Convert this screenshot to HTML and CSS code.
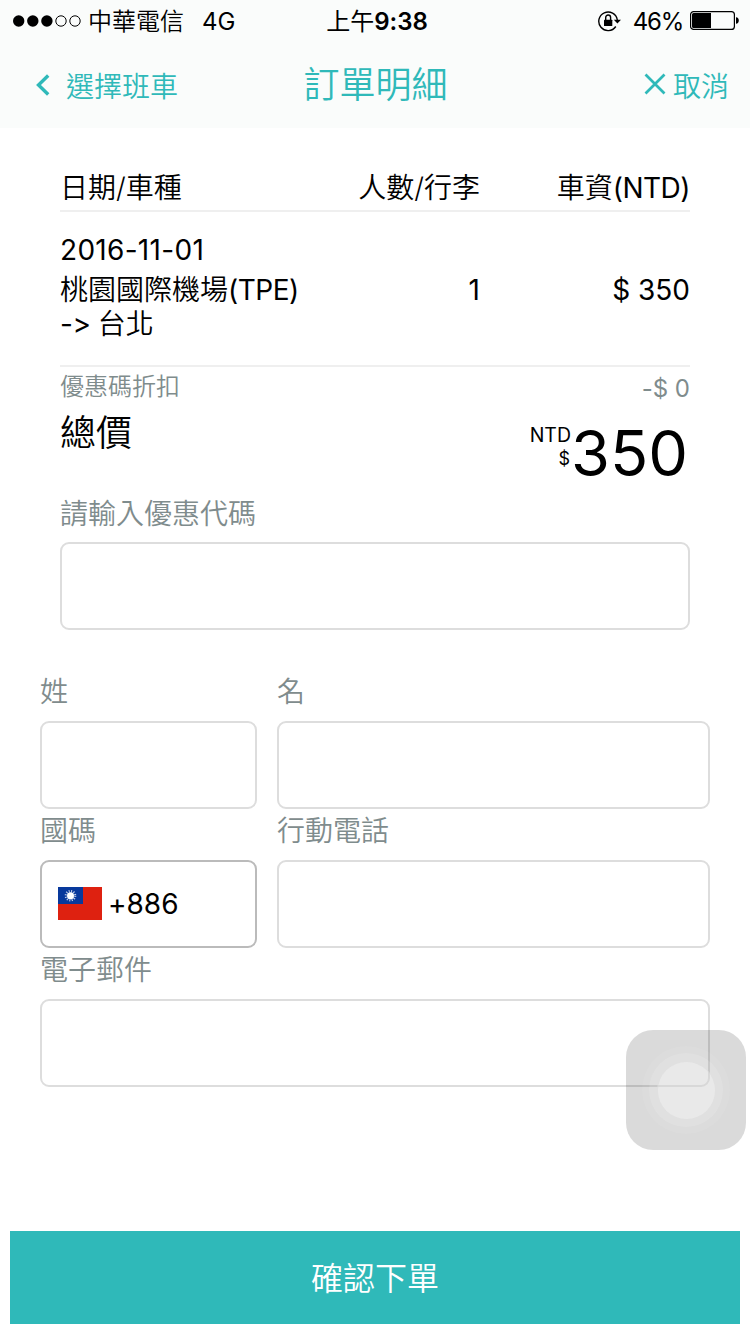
FILE: index.html
```html
<!DOCTYPE html>
<html lang="zh-Hant">
<head>
<meta charset="utf-8">
<title>訂單明細</title>
<link rel="stylesheet" href="styles.css">
</head>
<body>
<header class="top">
  <div class="status">
    <div class="status-left">
      <svg class="signal" width="68" height="12" viewBox="0 0 68 12"><circle cx="5.7" cy="6" r="5.7"/><circle cx="19.8" cy="6" r="5.7"/><circle cx="33.9" cy="6" r="5.7"/><g fill="none" stroke="#000" stroke-width="1"><circle cx="48" cy="6" r="5.2"/><circle cx="62" cy="6" r="5.2"/></g></svg>
      <span class="carrier">中華電信</span><span class="network">4G</span>
    </div>
    <div class="clock">上午<b>9:38</b></div>
    <div class="status-right">
      <svg class="lock" width="24" height="22" viewBox="0 0 24 22"><path d="M17.800 16.500A9.300 9.300 0 1 1 19.300 10" fill="none" stroke="#000" stroke-width="1.400"/><path d="M15.800 9.700H23l-3.600 3.800z"/><rect x="6" y="9.700" width="8.300" height="6.300" rx=".5"/><path d="M7.700 10V7.400a2.450 2.450 0 0 1 4.900 0V10" fill="none" stroke="#000" stroke-width="1.400"/></svg>
      <span class="percent">46%</span>
      <svg class="battery" width="50" height="20" viewBox="0 0 50 20"><rect x=".6" y=".6" width="43.8" height="17.8" rx="3" fill="none" stroke="#000" stroke-width="1.2"/><path d="M2 3.5Q2 2 3.5 2H21v15H3.500Q2 17 2 15.500zM46 6.300q2.800.3 2.800 3.200t-2.800 3.200z"/></svg>
    </div>
  </div>
  <nav class="nav">
    <a class="back"><svg width="14" height="22" viewBox="0 0 14 22"><path d="M12.200 1.500 2.500 11l9.700 9.500" fill="none" stroke="#2fb9b9" stroke-width="3.400"/></svg><span>選擇班車</span></a>
    <h1 class="title">訂單明細</h1>
    <a class="cancel"><svg width="22" height="22" viewBox="0 0 22 22"><path d="m1.500 1.500 19 19m0-19-19 19" fill="none" stroke="#2fb9b9" stroke-width="2.700"/></svg><span>取消</span></a>
  </nav>
</header>
<main>
  <section class="order">
    <div class="row head"><span>日期/車種</span><span>人數/行李</span><span>車資<span class="latin tight">(NTD)</span></span></div>
    <div class="row item">
      <div class="trip"><div class="date latin">2016-11-01</div><div>桃園國際機場<span class="latin tight">(TPE)</span></div><div><span class="latin tight">-&gt; </span>台北</div></div>
      <span class="latin">1</span><span class="latin">$ 350</span>
    </div>
    <div class="discount"><span>優惠碼折扣</span><span class="minus">-$ 0</span></div>
    <div class="total"><span class="total-label">總價</span><div class="currency"><div>NTD</div><div>$</div></div><span class="amount">350</span></div>
    <label class="label promo-label">請輸入優惠代碼</label>
    <div class="field"></div>
  </section>
  <form class="form">
    <div class="pair">
      <div><label class="label">姓</label><div class="field"></div></div>
      <div><label class="label">名</label><div class="field"></div></div>
    </div>
    <div class="pair">
      <div><label class="label">國碼</label><div class="field code">
        <svg class="flag" width="44" height="33" viewBox="0 0 44 33"><path fill="#de2110" d="M0 0h44v33H0z"/><path fill="#08399c" d="M0 0h25v17H0z"/><circle cx="12.500" cy="8.700" r="4.500" fill="none" stroke="#fff" stroke-opacity=".75" stroke-width="2.600" stroke-dasharray="1 1.356"/><circle cx="12.500" cy="8.700" r="3.500" fill="#fff"/></svg>
        <span class="latin">+886</span></div></div>
      <div><label class="label">行動電話</label><div class="field"></div></div>
    </div>
    <label class="label">電子郵件</label>
    <div class="field"></div>
  </form>
</main>
<button class="submit">確認下單</button>
<div class="touch"><div class="ring outer"><div class="ring middle"><div class="ring inner"></div></div></div></div>
</body>
</html>
```
FILE: styles.css
```css
* { box-sizing: border-box; }
body {
  margin: 0; width: 750px; height: 1334px; overflow: hidden;
  display: flex; flex-direction: column; position: relative;
  background: #fff; color: #000;
  font: 350 28px/34px Inter, "Noto Sans CJK TC", sans-serif;
  font-feature-settings: "calt" 0;
}
svg { display: block; flex: none; }
.latin { font-weight: 400; }
.tight { letter-spacing: -.5px; }
.top { height: 128px; background: #fafcfb; }
.status {
  height: 40px; display: grid; grid-template-columns: 1fr auto 1fr;
  align-items: center; font-size: 24px; line-height: 38px; padding: 0 11px 0 13px;
}
.status span, .clock { padding-top: 3px; }
.status-left, .status-right { display: flex; align-items: center; }
.status-right { justify-content: flex-end; }
.carrier { margin-left: 7px; }
.network { margin-left: 18px; font-weight: 400; }
.clock { font-weight: 400; padding-left: 2px; }
.clock b { font-weight: 600; }
.lock { margin-right: 11px; }
.percent { margin-right: 7px; font-weight: 400; letter-spacing: -1.200px; }
.battery, .signal { margin-top: 1px; }
.battery { margin-right: -1px; }
.nav {
  height: 88px; display: grid; grid-template-columns: 1fr auto 1fr;
  align-items: center; padding: 0 21px 0 36px; color: #2fb9b9;
}
.back, .cancel { display: flex; align-items: center; }
.back span, .cancel span { padding-top: 5px; }
.back svg { margin-top: 2px; }
.back { gap: 16px; }
.cancel { justify-content: flex-end; gap: 7px; }
.title { margin: 0 14px 0 0; font-size: 36px; font-weight: 350; line-height: 86px; padding-top: 2px; }
.order { padding: 42px 60px 0; }
.row { display: grid; grid-template-columns: 240px 180px 210px; align-items: center; border-bottom: 2px solid #efefef; white-space: nowrap; }
.row > span { text-align: right; }
.row > span:first-child { text-align: left; }
.head { height: 42px; padding-bottom: 4px; }
.item { height: 155px; }
.item > span { padding-top: 2px; }
.trip { padding-bottom: 4px; }
.date { margin-bottom: 6px; letter-spacing: .3px; }
.discount { display: flex; justify-content: space-between; height: 38px; line-height: 39px; font-size: 24px; color: #7f8c8d; }
.minus { padding-top: 2px; font-weight: 400; }
.total { display: flex; height: 90px; }
.total-label { flex: 1; font-size: 36px; line-height: 57px; }
.currency { font-size: 19.5px; line-height: 24px; text-align: right; padding-top: 18px; font-weight: 400; }
.currency div:last-child { font-size: 18px; padding-right: 1px; }
.amount { font-size: 63px; line-height: 96px; margin-left: 0; padding-right: 2px; font-weight: 400; }
.label { display: block; height: 51px; line-height: 45px; color: #7f8c8d; }
.promo-label { height: 47px; line-height: 38px; }
.field { height: 88px; border: 2px solid #ddd; border-radius: 9px; }
.form { padding: 40px 40px 0; }
.pair { display: grid; grid-template-columns: 217px 433px; gap: 20px; }
.code { display: flex; align-items: center; gap: 6px; padding-left: 16px; border-color: #bbb; }
.flag { margin-bottom: 1px; }
.submit {
  margin: auto 10px 10px; height: 93px; flex: none; border: 0; padding: 1px 0 0;
  background: #2fb9b9; color: #fff; font: inherit; font-size: 32px; line-height: 91px;
}
/* Floating assistive control, above the page content */
.touch {
  position: absolute; left: 626px; top: 1030px; width: 120px; height: 120px;
  border-radius: 27px; background: rgba(0,0,0,.147);
  display: flex; align-items: center; justify-content: center;
}
.ring { border-radius: 50%; display: flex; align-items: center; justify-content: center; }
.outer { width: 88px; height: 88px; background: rgba(255,255,255,.06); }
.middle { width: 74px; height: 74px; background: rgba(255,255,255,.13); }
.inner { width: 59px; height: 59px; background: rgba(255,255,255,.3); border: 1px solid rgba(210,210,210,.4); }
```
